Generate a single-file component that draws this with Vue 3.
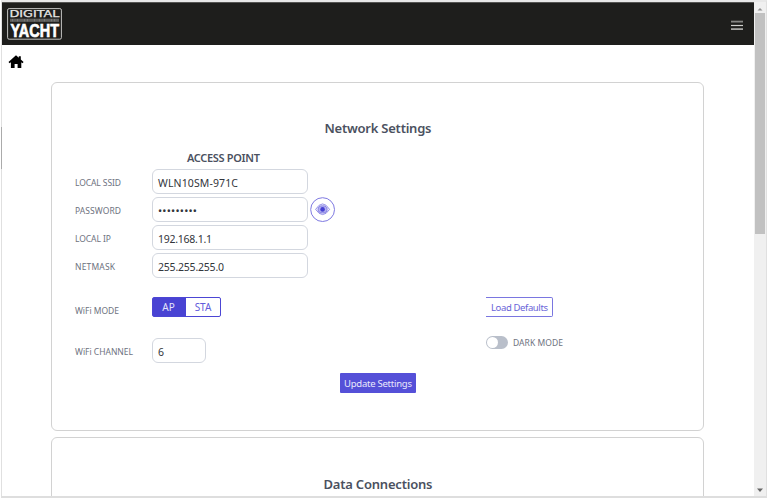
<script setup>
import { ref } from 'vue'

const fields = [
  { label: 'LOCAL SSID', value: 'WLN10SM-971C', w: 46, vw: 80 },
  { label: 'PASSWORD', value: '•••••••••', w: 46, vw: 39, secret: true },
  { label: 'LOCAL IP', value: '192.168.1.1', w: 36, vw: 54 },
  { label: 'NETMASK', value: '255.255.255.0', w: 40, vw: 66 },
]
const mode = ref('AP')
const ticks = [11, 14, 16, 19, 21, 23, 26, 29, 31, 33, 36, 38, 41, 43, 46, 48, 50, 53, 56, 58]
</script>

<template>
  <div class="window">
    <div class="page">
      <header class="topbar">
        <svg class="logo" width="56" height="33" viewBox="6 7 56 33">
          <rect x="7.6" y="8.6" width="53.8" height="30.6" rx="1.5" fill="none" stroke="#c4c4c2" stroke-width="1" />
          <text x="9.5" y="17.2" class="logo-top" textLength="50" lengthAdjust="spacingAndGlyphs">DIGITAL</text>
          <path d="M10 20.2h49" stroke="#777775" stroke-width="3" />
          <path v-for="t in ticks" :key="t" :d="`M${t} 18.7v3`" stroke="#343432" stroke-width=".7" />
          <text x="10.5" y="37" class="logo-main" textLength="48.5" lengthAdjust="spacingAndGlyphs">YACHT</text>
        </svg>
        <svg class="menu" width="12" height="12" viewBox="0 0 12 12">
          <path d="M0 1.6h12" stroke="#858583" stroke-width="1.8" />
          <path d="M0 5.5h12" stroke="#d0d0ce" stroke-width="1.2" />
          <path d="M0 9.1h12" stroke="#b5b5b3" stroke-width="1.6" />
        </svg>
      </header>
      <nav class="crumb">
        <svg width="16" height="14" viewBox="0 0 16 14">
          <path d="M8 .3 10.8 2.7V1.2h2v3.3L15.6 7.1 14.5 8.2 13.3 7.2V13H9.6V9H6.6v4H2.9V7.2L1.6 8.2.5 7.1Z" fill="#000" />
        </svg>
      </nav>
      <main class="cards">
        <section class="card">
          <h2 class="title">
            <svg width="110" height="20"><text x="1.5" y="14.2" textLength="107">Network Settings</text></svg>
          </h2>
          <h3 class="subtitle">
            <svg width="74" height="16"><text x="0" y="11.2" textLength="73">ACCESS POINT</text></svg>
          </h3>
          <div v-for="f in fields" :key="f.label" class="row">
            <span class="label"><svg width="70" height="14"><text x="0" y="11" :textLength="f.w">{{ f.label }}</text></svg></span>
            <div class="input" :class="{ secret: f.secret }">
              <svg width="90" height="16"><text x="0" y="12.8" :textLength="f.vw">{{ f.value }}</text></svg>
            </div>
            <button v-if="f.secret" class="eye">
              <svg width="26" height="26" viewBox="0 0 26 26">
                <circle cx="12.6" cy="12.6" r="11.9" fill="#fff" stroke="#7f7ae2" stroke-width="1" />
                <path d="M5.6 12.4q7-11 14 0q-7 10.4-14 0Z" fill="#eeedfc" stroke="#7f7ae2" stroke-width=".8" />
                <ellipse cx="12.6" cy="12.4" rx="4.5" ry="3.6" fill="#b5b2ef" stroke="#736ee0" stroke-width=".8" />
                <circle cx="12.6" cy="12.4" r="2.3" fill="#453fd2" />
              </svg>
            </button>
          </div>
          <div class="row mode">
            <span class="label"><svg width="70" height="14"><text x="0" y="10" textLength="44">WiFi MODE</text></svg></span>
            <div class="switch">
              <button v-for="m in ['AP', 'STA']" :key="m" :class="{ on: mode === m }" @click="mode = m">{{ m }}</button>
            </div>
            <button class="defaults"><svg width="60" height="16"><text x="1" y="11.8" textLength="57">Load Defaults</text></svg></button>
          </div>
          <div class="row channel">
            <span class="label"><svg width="74" height="14"><text x="0" y="11" textLength="58">WiFi CHANNEL</text></svg></span>
            <div class="input small">
              <svg width="20" height="16"><text x="0" y="12.5">6</text></svg>
            </div>
            <div class="dark">
              <span class="track"><i></i></span>
              <span class="label"><svg width="54" height="14"><text x="0" y="11" textLength="50">DARK MODE</text></svg></span>
            </div>
          </div>
          <button class="update"><svg width="70" height="18"><text x="1" y="13" textLength="68">Update Settings</text></svg></button>
        </section>
        <section class="card">
          <h2 class="title">
            <svg width="110" height="20"><text x=".5" y="15" textLength="109">Data Connections</text></svg>
          </h2>
        </section>
      </main>
    </div>
    <aside class="scrollbar">
      <svg width="10" height="10" viewBox="0 0 10 10"><path d="M2.5 7.6 5 5l2.5 2.6Z" fill="#929292" /></svg>
      <div class="thumb"></div>
      <svg class="down" width="10" height="10" viewBox="0 0 10 10"><path d="M2 4.4h6L5 8Z" fill="#666" /></svg>
    </aside>
    <span class="edge"></span>
  </div>
</template>

<style>
body { background: #fff; overflow: hidden; }
</style>

<style scoped>
* { box-sizing: border-box; }
svg { display: block; flex: none; overflow: visible; }
button { padding: 0; margin: 0; font-family: inherit; background: none; border: 0; }
.window {
  position: relative;
  display: flex;
  width: 766px;
  height: 498px;
  margin-left: 1px;
  border: 1px solid #e0e0e0;
  border-top: 2px solid #e8e8e8;
  border-bottom: 2px solid #dedede;
  font-family: "Noto Sans", "Open Sans", sans-serif;
  background: #fff;
}
.page { width: 752px; overflow: hidden; }
.topbar {
  display: flex;
  justify-content: space-between;
  height: 43px;
  padding: 4px 11px 0 4px;
  background: #1e1e1c;
  border-top: 1px solid #555553;
}
.topbar .menu { margin-top: 13px; }
.logo-top { font: 400 8.4px "DejaVu Sans", sans-serif; fill: #e6e6e4; stroke: #e6e6e4; stroke-width: .25px; }
.logo-main { font: 700 19px "Liberation Sans", sans-serif; fill: #fff; stroke: #fff; stroke-width: .7px; }
.crumb { height: 37px; padding: 10px 0 0 6px; }
.cards { display: flex; flex-direction: column; gap: 6px; margin-left: 49px; width: 653px; }
.card {
  height: 349px;
  flex: none;
  padding: 0 22px;
  border: 1.5px solid #d2d2d2;
  border-radius: 6px;
}
.title, .subtitle { display: flex; justify-content: center; margin: 0; font-weight: 600; }
.title { padding-top: 36px; }
.title text { font-size: 13px; fill: #4b5160; }
.subtitle { width: 143px; margin: 12px 0 2px 78px; }
.subtitle text { font-size: 11px; fill: #4b5160; }
.row { display: flex; align-items: center; height: 25px; margin-bottom: 3px; }
.label { width: 77px; margin-left: 1px; flex: none; font-size: 8.5px; }
.label text { fill: #6e7280; }
.input {
  display: flex;
  align-items: center;
  width: 156px;
  height: 25px;
  padding: 0 5px;
  border: 1px solid #d3d7df;
  border-radius: 6px;
  font-size: 10.5px;
}
.input text { fill: #32353b; }
.input.secret { font-size: 11px; }
.input.small { width: 54px; }
.eye { margin-left: 2px; }
.mode { height: 20px; margin: 19px 0 0; }
.mode .label { padding-top: 7px; }
.switch { display: flex; width: 69px; height: 20px; border: 1px solid #4c46d4; border-radius: 2px; }
.switch button { width: 34px; font-size: 10px; line-height: 18px; color: #625cdb; }
.switch .on { width: 33px; background: #4943d3; color: #e4e3fa; padding-right: 2px; }
.defaults {
  display: flex;
  align-items: center;
  height: 20px;
  width: 67px;
  margin-left: 265px;
  padding-left: 4px;
  border: 1px solid #7a76e0;
  border-left-width: 0;
  border-radius: 0 2px 2px 0;
  font-size: 9.5px;
}
.defaults text { fill: #6964d8; }
.channel { margin: 21px 0 0; }
.dark { display: flex; align-items: center; margin: -17px 0 0 280px; }
.dark .label { width: auto; margin-left: 5px; }
.track { width: 22px; height: 13px; padding: 1px; border-radius: 7px; background: #b9bfca; }
.track i { display: block; width: 11px; height: 11px; border-radius: 50%; background: #fff; }
.update {
  display: flex;
  align-items: center;
  justify-content: center;
  width: 76px;
  height: 20px;
  margin: 10px auto 0;
  background: #5550d8;
  border-radius: 1px;
  font-size: 9.5px;
}
.update text { fill: #e9e8fc; }
.scrollbar {
  display: flex;
  flex-direction: column;
  align-items: center;
  width: 12px;
  padding: 1px 0 2px;
  background: #f0f0f0;
}
.thumb { width: 10px; height: 221px; background: #c1c1c1; }
.down { margin-top: auto; }
.edge { position: absolute; left: -1px; top: 125px; width: 1px; height: 42px; background: #ababab; }
</style>
